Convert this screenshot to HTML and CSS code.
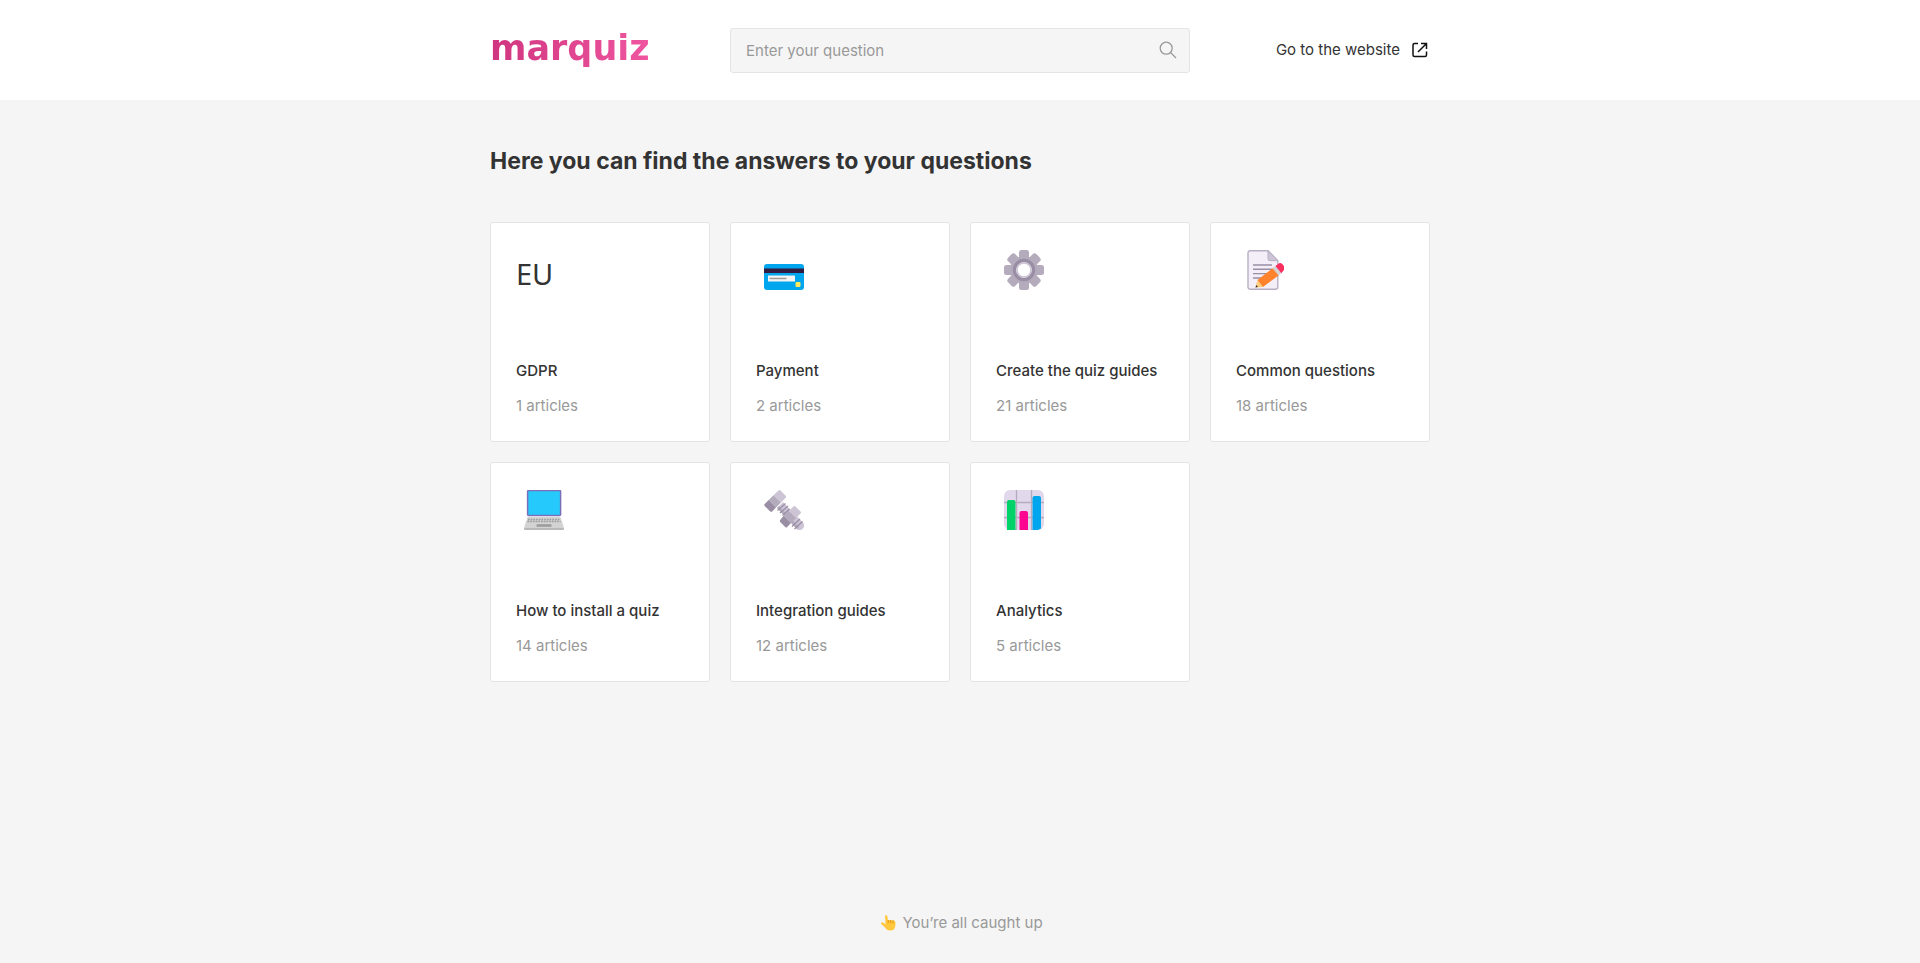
FILE: index.html
```html
<!DOCTYPE html>
<html lang="en">
<head>
  <meta charset="UTF-8" />
  <meta name="viewport" content="width=device-width, initial-scale=1.0" />
  <title>Marquiz Help Center</title>
  <link rel="stylesheet" href="styles.css">
</head>
<body>
  <header class="header">
    <div class="container header-inner">
      <a class="logo" href="#">marquiz</a>

      <form class="search" role="search">
        <input type="text" id="search" placeholder="Enter your question" aria-label="Enter your question" />
        <button type="submit" aria-label="Search">
          <svg width="18" height="18" viewBox="0 0 18 18" fill="none" stroke="#999" stroke-width="1.3">
            <circle cx="7.2" cy="7.2" r="6" />
            <path d="M11.5 11.5L17 17" />
          </svg>
        </button>
      </form>

      <a class="site-link" href="#">
        Go to the website
        <svg width="16" height="16" viewBox="0 0 16 16" fill="none" stroke="#111" stroke-width="1.5">
          <path d="M6 1.5H2.500A1.500 1.500 0 0 0 1 3v10a1.500 1.500 0 0 0 1.500 1.500H13a1.500 1.500 0 0 0 1.500-1.500V9.500" />
          <path d="M9 1.500H14.500V7M14.500 1.500L6 10" />
        </svg>
      </a>
    </div>
  </header>

  <main class="container main">
    <h1>Here you can find the answers to your questions</h1>

    <div class="cards">
      <a class="card" href="#">
        <span class="icon flag">EU</span>
        <h2>GDPR</h2>
        <p>1 articles</p>
      </a>

      <a class="card" href="#">
        <span class="icon">
          <svg width="40" height="40" viewBox="0 0 40 40">
            <rect y="14" width="40" height="26" rx="3" fill="#00a6ed" />
            <path d="M0 18.500h40v4.500H0z" fill="#321b41" />
            <rect x="4" y="25.500" width="27" height="6" rx=".5" fill="#f4f4f4" />
            <path d="M6 28.500h16" stroke="#9b9b9b" stroke-width="1.3" stroke-linecap="round" />
            <rect x="31.500" y="32" width="5" height="5" rx="1" fill="#ffe95c" />
          </svg>
        </span>
        <h2>Payment</h2>
        <p>2 articles</p>
      </a>

      <a class="card" href="#">
        <span class="icon">
          <svg width="40" height="40" viewBox="0 0 40 40">
            <g fill="#b4acbc">
              <path id="tooth" d="M15 10V2.500Q15 0 17.500 0h5Q25 0 25 2.500v35Q25 40 22.500 40h-5Q15 40 15 37.500z" />
              <use href="#tooth" transform="rotate(45 20 20)" />
              <use href="#tooth" transform="rotate(90 20 20)" />
              <use href="#tooth" transform="rotate(135 20 20)" />
              <circle cx="20" cy="20" r="14" />
            </g>
            <circle cx="20" cy="20" r="9.500" fill="#fff" stroke="#998ea4" stroke-width="3.500" />
            <circle cx="20" cy="20" r="7" fill="#fff" stroke="#cdc4d6" stroke-width="1.500" />
          </svg>
        </span>
        <h2>Create the quiz guides</h2>
        <p>21 articles</p>
      </a>

      <a class="card" href="#">
        <span class="icon">
          <svg width="40" height="40" viewBox="-3 0 40 40">
            <path d="M3.500.700H21l9.800 10V37a2.300 2.300 0 0 1-2.300 2.300h-25A2.300 2.300 0 0 1 1 37V3A2.300 2.300 0 0 1 3.500.700z" fill="#f3eef8" stroke="#b9afc4" stroke-width="1.400" />
            <path d="M21 .700l9.800 10H23a2 2 0 0 1-2-2z" fill="#cdc4d6" stroke="#b9afc4" />
            <path d="M6 15h19M6 19.300h19M6 23.600h17M6 28h12" stroke="#998ea4" stroke-width="1.400" />
            <path d="M8.500 37.500L10.500 30L16 37z" fill="#ffce7c" />
            <path d="M8.500 37.500l.7-2.500 1.800 2z" fill="#402a32" />
            <path d="M10.500 30L26.500 17.500l6 7.300L16 37z" fill="#ff822d" />
            <path d="M25.500 18.300l3-2.300 6 7.200-3 2.400z" fill="#d3d3d3" />
            <path d="M28.500 16l2.500-1.900a3.500 3.500 0 0 1 5 .7l.4.600a3.800 3.800 0 0 1-.3 5.700l-1.800 2.100z" fill="#f92f60" />
          </svg>
        </span>
        <h2>Common questions</h2>
        <p>18 articles</p>
      </a>

      <a class="card" href="#">
        <span class="icon">
          <svg width="40" height="40" viewBox="0 0 40 40">
            <rect x="3.600" y=".600" width="33" height="25" rx="1" fill="#26c9fc" stroke="#7b70b8" stroke-width="1.500" />
            <path d="M3.500 27h33L40 38H0z" fill="#d3d3d3" />
            <path d="M4 29.500h32M3.500 31.500h33" stroke="#9b9b9b" stroke-width="1.300" stroke-dasharray="1.700 1" />
            <rect x="12.500" y="34.300" width="15" height="2.500" rx=".5" fill="#9b9b9b" />
            <path d="M0 38h40v1q0 1-1 1H1q-1 0-1-1z" fill="#b9b9b9" />
          </svg>
        </span>
        <h2>How to install a quiz</h2>
        <p>14 articles</p>
      </a>

      <a class="card" href="#">
        <span class="icon">
          <svg width="40" height="40" viewBox="0 0 40 40">
            <path d="M13 18l6-6 19.500 20a4.500 4.500 0 0 1-6 7z" fill="#cdc4d6" />
            <path d="M13 18l2-2 20 21-2 2z" fill="#b4acbc" />
            <path d="M13.500 20.500l8-7M16 23l8-7M18.500 25.500l7-6.500M28 36.500l8-7.500M30.500 39l8-7.500" stroke="#998ea4" stroke-width="1.200" />
            <path d="M14.500.500q1-1 2 0l5.200 5.200q.800.800 0 2L17 12.500 9.500 5.200z" fill="#cdc4d6" />
            <path d="M9.500 5.200L17 12.500 12 17.500 4.700 10z" fill="#b4acbc" />
            <path d="M4.700 10L12 17.500 8.200 21.400q-1 .9-2 0L.700 16q-1-1 0-2z" fill="#998ea4" />
            <path d="M29.500 16.500q1-1 2 0l5 5q1 1 0 2L32 28l-7.300-7z" fill="#cdc4d6" />
            <path d="M24.700 21L32 28l-5 5-7.300-7.300z" fill="#b4acbc" />
            <path d="M19.700 25.700L27 33l-3.800 4q-1 1-2 0l-5-5q-1-1 0-2z" fill="#998ea4" />
          </svg>
        </span>
        <h2>Integration guides</h2>
        <p>12 articles</p>
      </a>

      <a class="card" href="#">
        <span class="icon">
          <svg width="40" height="40" viewBox="0 0 40 40">
            <rect width="40" height="40" rx="6" fill="#e1d8ec" />
            <path d="M0 12.500h40M0 27.500h40M12.500 0v40M27.500 0v40" stroke="#b4acbc" stroke-width="1.300" />
            <path d="M3 40V12q0-2 2-2h4.500q2 0 2 2v28z" fill="#00d26a" />
            <path d="M15.500 40V23q0-2 2-2H22q2 0 2 2v17z" fill="#fc0591" />
            <path d="M28.500 40V8q0-2 2-2H35q2 0 2 2v30.500l-3 1.500z" fill="#00a6ed" />
          </svg>
        </span>
        <h2>Analytics</h2>
        <p>5 articles</p>
      </a>
    </div>
  </main>

  <footer class="footer">
    <svg width="15" height="16" viewBox="0 0 15 16">
      <path d="M4 1.400c0-1.700 2.300-1.700 2.400 0l.5 3.700 5 .200c1.800.200 2.700 1.400 2.600 3.200l-.4 3.600c-.4 2.400-2.200 3.500-4.800 3.500-2.700 0-4.200-.9-5.200-3L.3 8.900C-.3 7.600 1 6.800 2 7.600l2.600 1.600z" fill="#ffc83d" />
      <path d="M7.200 5.500v2.300M9.600 5.500v2.300M12 5.800v2" stroke="#d67d00" stroke-width=".7" stroke-linecap="round" />
    </svg>
    <span>You’re all caught up</span>
  </footer>
</body>
</html>
```
FILE: styles.css
```css
* {
  box-sizing: border-box;
}

body {
  margin: 0;
  min-height: 100vh;
  display: flex;
  flex-direction: column;
  font-family: Inter, sans-serif;
  font-size: 15px;
  line-height: 20px;
  color: #333;
  background: #f5f5f5;
}

a {
  color: inherit;
  text-decoration: none;
}

.container {
  width: 100%;
  max-width: 980px;
  margin: 0 auto;
  padding: 0 20px;
}

.header {
  background: #fff;
}

.header-inner {
  display: grid;
  grid-template-columns: repeat(4, 1fr);
  column-gap: 20px;
  align-items: center;
  height: 100px;
}

.logo {
  justify-self: start;
  padding-bottom: 4px;
  font-family: "DejaVu Sans", sans-serif;
  font-size: 35px;
  font-weight: bold;
  line-height: 40px;
  color: transparent;
  background: linear-gradient(90deg, #d03580, #f0559f);
  -webkit-background-clip: text;
  background-clip: text;
}

.search {
  grid-column: span 2;
  display: flex;
  align-items: center;
  height: 45px;
  border: 1px solid #e4e4e4;
  border-radius: 3px;
  background: #f5f5f5;
}

.search input {
  flex: 1;
  min-width: 0;
  padding: 2px 15px 0;
  border: none;
  outline: none;
  background: none;
  font: inherit;
  color: #333;
}

.search input::placeholder {
  color: #999;
}

.search button {
  display: flex;
  padding: 0 12px;
  border: none;
  background: none;
  cursor: pointer;
}

.site-link {
  justify-self: end;
  display: flex;
  align-items: center;
  gap: 12px;
  padding-right: 2px;
}

.main {
  flex: 1;
}

h1 {
  margin: 45px 0;
  font-size: 23px;
  font-weight: 700;
  line-height: 32px;
}

.cards {
  display: grid;
  grid-template-columns: repeat(4, 1fr);
  gap: 20px;
}

.card {
  display: flex;
  flex-direction: column;
  height: 220px;
  padding: 25px;
  border: 1px solid #e4e4e4;
  border-radius: 3px;
  background: #fff;
}

.icon {
  height: 56px;
  padding: 2px 8px;
}

.flag {
  padding: 0;
  font-family: "Noto Sans", sans-serif;
  font-size: 29px;
  line-height: 52px;
}

.card h2 {
  margin: auto 0 15px;
  font-size: 15px;
  font-weight: 500;
  line-height: 20px;
}

.card p {
  margin: 0;
  color: #999;
}

.footer {
  display: flex;
  justify-content: center;
  align-items: center;
  gap: 6px;
  padding: 30px 30px 30px 34px;
  color: #999;
}

@media (max-width: 900px) {
  .cards {
    grid-template-columns: repeat(2, 1fr);
  }
}
```
